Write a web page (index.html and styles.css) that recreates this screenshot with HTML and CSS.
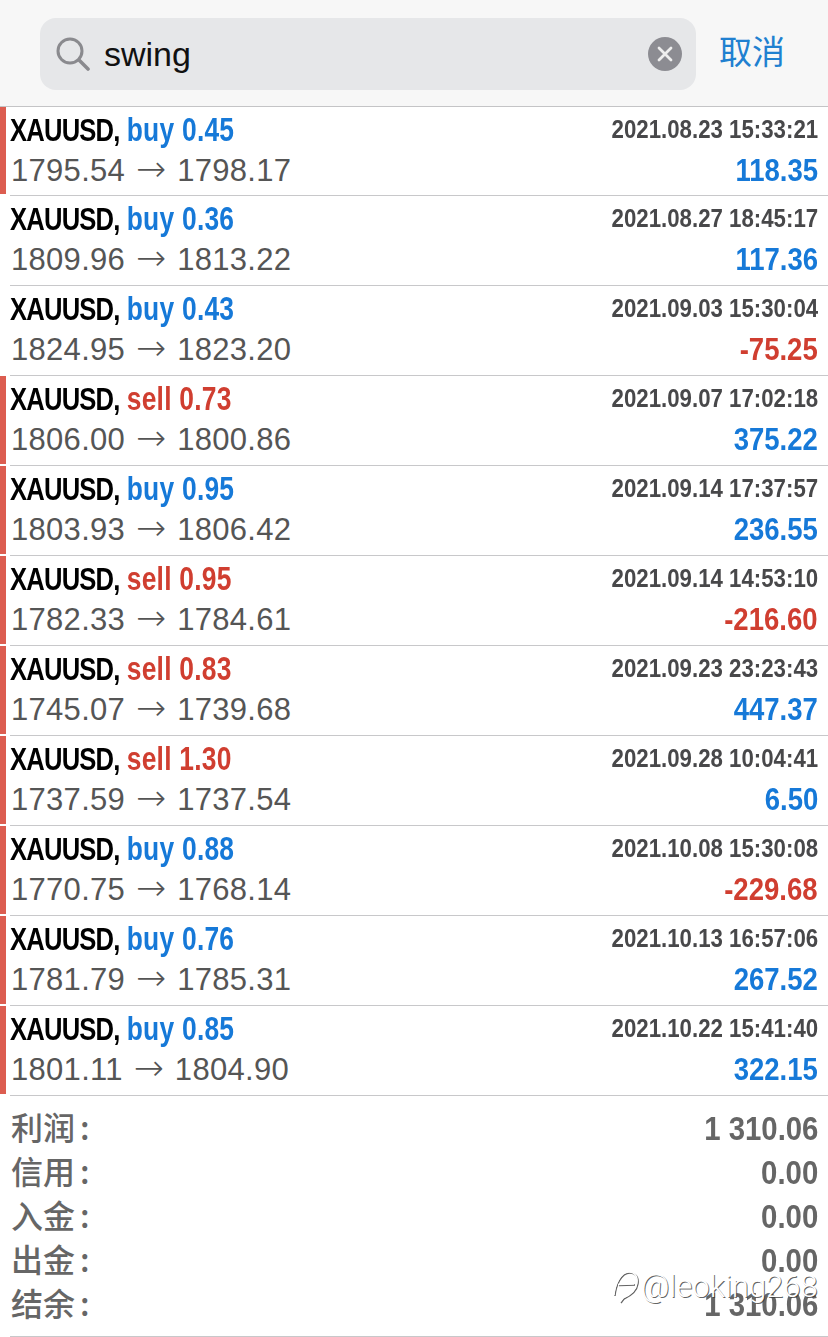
FILE: index.html
```html
<!DOCTYPE html>
<html lang="en">
<head>
  <meta charset="UTF-8">
  <meta name="viewport" content="width=device-width, initial-scale=1.0">
  <title>History</title>
  <link rel="stylesheet" href="styles.css">
</head>
<body>
  <div class="page">
    <header class="search-bar">
      <div class="search-box">
        <svg class="search-icon" width="34" height="34" viewBox="0 0 34 34"><circle cx="14" cy="14" r="12" fill="none" stroke="#8a8a8e" stroke-width="3"/><path d="M23 23l9 9" stroke="#8a8a8e" stroke-width="3.6" stroke-linecap="round"/></svg>
        <span class="search-text">swing</span>
        <svg class="clear-icon" width="34" height="34" viewBox="0 0 34 34"><circle cx="17" cy="17" r="17" fill="#8c8c92"/><path d="M11 11l12 12M23 11L11 23" stroke="#eee" stroke-width="2.8" stroke-linecap="round"/></svg>
      </div>
      <span class="cancel">取消</span>
    </header>

    <div class="deal first flagged">
      <div class="deal-main">
        <div class="line"><span class="title"><b class="symbol">XAUUSD,</b> <span class="buy">buy 0.45</span></span><span class="date">2021.08.23 15:33:21</span></div>
        <div class="line"><span class="prices">1795.54<span class="arrow">→</span>1798.17</span><span class="profit">118.35</span></div>
      </div>
    </div>
    <div class="deal">
      <div class="deal-main">
        <div class="line"><span class="title"><b class="symbol">XAUUSD,</b> <span class="buy">buy 0.36</span></span><span class="date">2021.08.27 18:45:17</span></div>
        <div class="line"><span class="prices">1809.96<span class="arrow">→</span>1813.22</span><span class="profit">117.36</span></div>
      </div>
    </div>
    <div class="deal">
      <div class="deal-main">
        <div class="line"><span class="title"><b class="symbol">XAUUSD,</b> <span class="buy">buy 0.43</span></span><span class="date">2021.09.03 15:30:04</span></div>
        <div class="line"><span class="prices">1824.95<span class="arrow">→</span>1823.20</span><span class="profit loss">-75.25</span></div>
      </div>
    </div>
    <div class="deal flagged">
      <div class="deal-main">
        <div class="line"><span class="title"><b class="symbol">XAUUSD,</b> <span class="sell">sell 0.73</span></span><span class="date">2021.09.07 17:02:18</span></div>
        <div class="line"><span class="prices">1806.00<span class="arrow">→</span>1800.86</span><span class="profit">375.22</span></div>
      </div>
    </div>
    <div class="deal flagged">
      <div class="deal-main">
        <div class="line"><span class="title"><b class="symbol">XAUUSD,</b> <span class="buy">buy 0.95</span></span><span class="date">2021.09.14 17:37:57</span></div>
        <div class="line"><span class="prices">1803.93<span class="arrow">→</span>1806.42</span><span class="profit">236.55</span></div>
      </div>
    </div>
    <div class="deal flagged">
      <div class="deal-main">
        <div class="line"><span class="title"><b class="symbol">XAUUSD,</b> <span class="sell">sell 0.95</span></span><span class="date">2021.09.14 14:53:10</span></div>
        <div class="line"><span class="prices">1782.33<span class="arrow">→</span>1784.61</span><span class="profit loss">-216.60</span></div>
      </div>
    </div>
    <div class="deal flagged">
      <div class="deal-main">
        <div class="line"><span class="title"><b class="symbol">XAUUSD,</b> <span class="sell">sell 0.83</span></span><span class="date">2021.09.23 23:23:43</span></div>
        <div class="line"><span class="prices">1745.07<span class="arrow">→</span>1739.68</span><span class="profit">447.37</span></div>
      </div>
    </div>
    <div class="deal flagged">
      <div class="deal-main">
        <div class="line"><span class="title"><b class="symbol">XAUUSD,</b> <span class="sell">sell 1.30</span></span><span class="date">2021.09.28 10:04:41</span></div>
        <div class="line"><span class="prices">1737.59<span class="arrow">→</span>1737.54</span><span class="profit">6.50</span></div>
      </div>
    </div>
    <div class="deal flagged">
      <div class="deal-main">
        <div class="line"><span class="title"><b class="symbol">XAUUSD,</b> <span class="buy">buy 0.88</span></span><span class="date">2021.10.08 15:30:08</span></div>
        <div class="line"><span class="prices">1770.75<span class="arrow">→</span>1768.14</span><span class="profit loss">-229.68</span></div>
      </div>
    </div>
    <div class="deal flagged">
      <div class="deal-main">
        <div class="line"><span class="title"><b class="symbol">XAUUSD,</b> <span class="buy">buy 0.76</span></span><span class="date">2021.10.13 16:57:06</span></div>
        <div class="line"><span class="prices">1781.79<span class="arrow">→</span>1785.31</span><span class="profit">267.52</span></div>
      </div>
    </div>
    <div class="deal flagged">
      <div class="deal-main">
        <div class="line"><span class="title"><b class="symbol">XAUUSD,</b> <span class="buy">buy 0.85</span></span><span class="date">2021.10.22 15:41:40</span></div>
        <div class="line"><span class="prices">1801.11<span class="arrow">→</span>1804.90</span><span class="profit">322.15</span></div>
      </div>
    </div>

    <div class="summary">
      <div class="sum-row"><span class="sum-label">利润<span class="colon">:</span></span><span class="sum-value">1 310.06</span></div>
      <div class="sum-row"><span class="sum-label">信用<span class="colon">:</span></span><span class="sum-value">0.00</span></div>
      <div class="sum-row"><span class="sum-label">入金<span class="colon">:</span></span><span class="sum-value">0.00</span></div>
      <div class="sum-row"><span class="sum-label">出金<span class="colon">:</span></span><span class="sum-value">0.00</span></div>
      <div class="sum-row"><span class="sum-label">结余<span class="colon">:</span></span><span class="sum-value">1 310.06</span></div>
    </div>

    <div class="watermark">
      <svg class="wm-icon" width="28" height="36" viewBox="0 0 28 36"><path d="M1 26C2 16 7 3 16 3c6 0 9 5 8 11-1 7-7 12-14 15l-3 4M5 15.5l16-.5" fill="none" stroke="#fff" stroke-width="1.4"/></svg>
      <span>@leoking268</span>
    </div>
  </div>
</body>
</html>
```

FILE: styles.css
```css
html, body {
  margin: 0;
  padding: 0;
  background: #fff;
}
body {
  font-family: "Liberation Sans", Arial, sans-serif;
}
.page {
  position: relative;
  width: 828px;
  height: 1337px;
  overflow: hidden;
}

/* search header */
.search-bar {
  display: flex;
  align-items: flex-start;
  height: 107px;
  padding: 18px 0 0 40px;
  box-sizing: border-box;
  background: #f7f7f7;
  border-bottom: 1px solid #c4c4c6;
}
.search-box {
  display: flex;
  align-items: center;
  width: 656px;
  height: 72px;
  padding: 0 14px 0 16px;
  box-sizing: border-box;
  background: #e6e7e9;
  border-radius: 16px;
}
.search-icon {
  flex: none;
}
.search-text {
  flex: 1;
  margin-left: 14px;
  font-size: 34px;
  color: #111;
}
.cancel {
  margin: 12px 0 0 23px;
  font-family: "Noto Sans CJK SC", sans-serif;
  font-size: 33px;
  line-height: 40px;
  color: #2080d0;
}

/* deal rows */
.deal {
  display: flex;
  height: 90px;
}
.deal.first {
  height: 89px;
}
.deal::before {
  content: "";
  flex: none;
  width: 6px;
  height: calc(100% - 2px);
}
.deal.flagged::before {
  background: #dc5d50;
}
.deal-main {
  flex: 1;
  display: flex;
  flex-direction: column;
  margin-left: 4px;
  padding: 2px 10px 0 0;
  border-bottom: 1px solid #c8c8ca;
}
.line {
  display: flex;
  justify-content: space-between;
  align-items: center;
  height: 41px;
  white-space: nowrap;
}
.title {
  display: inline-block;
  font-size: 32px;
  font-weight: bold;
  transform: scaleX(.8);
  transform-origin: left center;
}
.symbol {
  color: #000;
  letter-spacing: -1px;
}
.buy, .sell {
  font-size: 33px;
  letter-spacing: .3px;
}
.buy {
  color: #1679d8;
}
.sell {
  color: #d03e30;
}
.date {
  display: inline-block;
  font-size: 25px;
  font-weight: bold;
  color: #48484a;
  transform: scaleX(.89);
  transform-origin: right center;
}
.prices {
  margin-left: 1px;
  font-size: 31px;
  letter-spacing: .3px;
  color: #555;
}
.arrow {
  display: inline-block;
  width: 52px;
  font-family: "DejaVu Sans", sans-serif;
  font-size: 36px;
  font-weight: 200;
  line-height: 30px;
  letter-spacing: 0;
  text-align: center;
}
.profit {
  display: inline-block;
  font-size: 32px;
  font-weight: bold;
  color: #1679d8;
  transform: scaleX(.86);
  transform-origin: right center;
}
.profit.loss {
  color: #d03e30;
}

/* totals */
.summary {
  margin-left: 10px;
  padding: 11px 10px 9px 1px;
  border-bottom: 1px solid #c8c8ca;
}
.sum-row {
  display: flex;
  justify-content: space-between;
  align-items: center;
  height: 44px;
  color: #666;
}
.sum-label {
  font-family: "Noto Sans CJK SC", sans-serif;
  font-size: 32px;
  font-weight: 500;
  line-height: 36px;
  margin-top: -6px;
}
.colon {
  margin-left: 5px;
}
.sum-value {
  display: inline-block;
  font-size: 33px;
  font-weight: bold;
  transform: scaleX(.89);
  transform-origin: right center;
}

/* photo watermark, sits over the totals */
.watermark {
  position: absolute;
  left: 613px;
  top: 1268px;
  display: flex;
  align-items: center;
  font-family: Roboto, sans-serif;
  font-size: 31px;
  font-weight: 300;
  color: #fff;
  text-shadow: 1px 1px 0 rgba(50, 50, 50, .75);
  white-space: nowrap;
}
.wm-icon {
  filter: drop-shadow(1px 1px 0 rgba(50, 50, 50, .75));
}
```
